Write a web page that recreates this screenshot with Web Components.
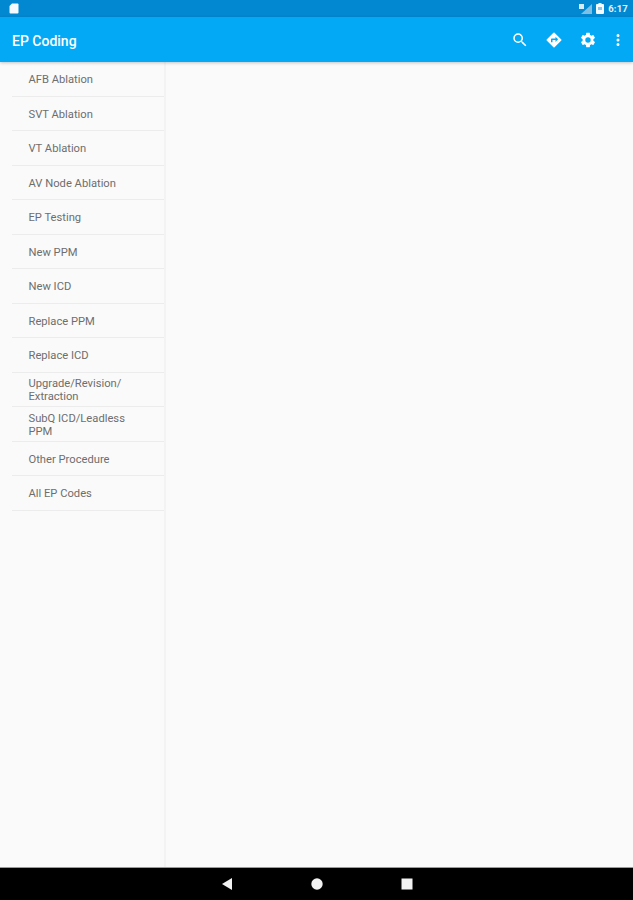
<!DOCTYPE html>
<html>
<head>
<meta charset="utf-8">
<title>EP Coding</title>
<style>
    html, body { margin: 0; height: 100%; background: #fafafa; }
    body { font-family: Roboto, "Liberation Sans", sans-serif; }
</style>
</head>
<body>
<ep-app>
    <status-bar slot="status"></status-bar>
    <app-bar slot="bar" title="EP Coding"></app-bar>
    <side-menu slot="menu">
        <menu-row>AFB Ablation</menu-row>
        <menu-row>SVT Ablation</menu-row>
        <menu-row>VT Ablation</menu-row>
        <menu-row>AV Node Ablation</menu-row>
        <menu-row>EP Testing</menu-row>
        <menu-row>New PPM</menu-row>
        <menu-row>New ICD</menu-row>
        <menu-row>Replace PPM</menu-row>
        <menu-row>Replace ICD</menu-row>
        <menu-row>Upgrade/Revision/ Extraction</menu-row>
        <menu-row>SubQ ICD/Leadless PPM</menu-row>
        <menu-row>Other Procedure</menu-row>
        <menu-row>All EP Codes</menu-row>
    </side-menu>
    <nav-bar slot="nav"></nav-bar>
</ep-app>

<script>
class EpApp extends HTMLElement {
    constructor() {
        super();
        this.attachShadow({ mode: 'open' });
        this.shadowRoot.innerHTML = /* html */ `
            <style>
                :host { display: flex; flex-direction: column; height: 900px; width: 633px; overflow: hidden; }
                .main { flex: 1; display: flex; min-height: 0; }
                .content { flex: 1; background: #fafafa; }
            </style>
            <slot name="status"></slot>
            <slot name="bar"></slot>
            <div class="main">
                <slot name="menu"></slot>
                <div class="content"></div>
            </div>
            <slot name="nav"></slot>
        `;
    }
}

class StatusBar extends HTMLElement {
    constructor() {
        super();
        this.attachShadow({ mode: 'open' });
        this.shadowRoot.innerHTML = /* html */ `
            <style>
                :host { display: flex; align-items: center; height: 17px; background: #0288d1; color: #e3f2fb; padding: 0 5px 0 9px; flex: none; }
                .right { margin-left: auto; display: flex; align-items: center; gap: 4px; }
                svg { display: block; }
                .time { font: 700 9.5px Roboto, sans-serif; letter-spacing: .2px; }
            </style>
            <svg width="10" height="11" viewBox="0 0 10 11"><path d="M3 .5h5.500a1 1 0 0 1 1 1v8a1 1 0 0 1-1 1h-7a1 1 0 0 1-1-1V3z" fill="#f4fafd"/></svg>
            <div class="right">
                <svg width="14" height="10" viewBox="0 0 14 10">
                    <path d="M14 0v10H3z" fill="#7fbfe3"/>
                    <path d="M1 0h5v5H1z" fill="#d5ebf7"/>
                </svg>
                <svg width="8" height="11" viewBox="0 0 8 11"><path d="M2.500 0h3v1H7a1 1 0 0 1 1 1v8a1 1 0 0 1-1 1H1a1 1 0 0 1-1-1V2a1 1 0 0 1 1-1h1.500z" fill="#f4fafd"/><path d="M2 4h4v3H2z" fill="#8cc7e8"/></svg>
                <span class="time">6:17</span>
            </div>
        `;
    }
}

class AppBar extends HTMLElement {
    constructor() {
        super();
        this.attachShadow({ mode: 'open' });
        this.shadowRoot.innerHTML = /* html */ `
            <style>
                :host { display: flex; align-items: center; height: 45px; background: #03a9f4; color: #fff; padding: 0 12px; flex: none;
                    position: relative; z-index: 1; box-shadow: 0 1px 3px rgba(0,0,0,.22); }
                .title { font: 500 14px Roboto, sans-serif; padding-top: 2px; }
                .actions { margin-left: auto; display: flex; align-items: center; gap: 16px; }
                .actions svg:last-child { margin-left: 2px; }
                svg { display: block; fill: #fff; }
            </style>
            <span class="title">${this.getAttribute('title')}</span>
            <div class="actions">
                <svg width="18" height="18" viewBox="0 0 24 24"><path d="M15.500 14h-.79l-.28-.27A6.470 6.470 0 0 0 16 9.500 6.500 6.500 0 1 0 9.500 16c1.610 0 3.090-.59 4.230-1.570l.27.28v.79l5 4.990L20.490 19zm-6 0C7.010 14 5 11.990 5 9.500S7.010 5 9.500 5 14 7.010 14 9.500 11.990 14 9.500 14z"/></svg>
                <svg width="18" height="18" viewBox="0 0 24 24"><path d="M21.710 11.290l-9-9a1 1 0 0 0-1.420 0l-9 9a1 1 0 0 0 0 1.420l9 9a1 1 0 0 0 1.420 0l9-9a1 1 0 0 0 0-1.420zM14 14.500V12h-4v3H8v-4a1 1 0 0 1 1-1h5V7.500l3.500 3.500z"/></svg>
                <svg width="18" height="18" viewBox="0 0 24 24"><path d="M19.140 12.940c.04-.3.060-.61.060-.94s-.02-.64-.07-.94l2.030-1.580a.49.49 0 0 0 .12-.61l-1.920-3.320a.49.49 0 0 0-.59-.22l-2.390.96a7.030 7.030 0 0 0-1.620-.94l-.36-2.540a.48.480 0 0 0-.48-.41h-3.840a.48.480 0 0 0-.47.41l-.36 2.540c-.59.240-1.130.57-1.620.94l-2.390-.96a.49.49 0 0 0-.59.22L2.740 8.870a.48.480 0 0 0 .12.61l2.030 1.580c-.05.3-.09.63-.09.94s.02.64.07.94l-2.030 1.580a.49.49 0 0 0-.12.61l1.920 3.320c.12.22.37.29.59.22l2.390-.96c.5.380 1.030.7 1.620.94l.36 2.540c.05.240.24.41.48.41h3.840c.24 0 .44-.17.47-.41l.36-2.540c.59-.24 1.130-.56 1.620-.94l2.390.96c.22.08.47 0 .59-.22l1.920-3.320a.48.480 0 0 0-.12-.61zM12 15.600a3.600 3.600 0 1 1 0-7.200 3.600 3.600 0 0 1 0 7.200z"/></svg>
                <svg width="6" height="18" viewBox="9 0 6 24"><path d="M12 8a2 2 0 1 0 0-4 2 2 0 0 0 0 4zm0 2a2 2 0 1 0 0 4 2 2 0 0 0 0-4zm0 6a2 2 0 1 0 0 4 2 2 0 0 0 0-4z"/></svg>
            </div>
        `;
    }
}

class SideMenu extends HTMLElement {
    constructor() {
        super();
        this.attachShadow({ mode: 'open' });
        this.shadowRoot.innerHTML = /* html */ `
            <style>
                :host { display: block; width: 164px; height: 100%; border-right: 2px solid #f3f3f3; background: #fafafa; flex: none; }
                .list { display: grid; grid-auto-rows: 34.5px; margin: .4px 0 0 12px; }
            </style>
            <div class="list"><slot></slot></div>
        `;
    }
}

class MenuRow extends HTMLElement {
    constructor() {
        super();
        this.attachShadow({ mode: 'open' });
        this.shadowRoot.innerHTML = /* html */ `
            <style>
                :host { display: flex; align-items: center; box-sizing: border-box; padding: 1px 30px 0 16.500px; border-bottom: 1px solid #ececec;
                    font: 400 11.2px/13px Roboto, sans-serif; color: #6e6e6e; }
            </style>
            <slot></slot>
        `;
    }
}

class NavBar extends HTMLElement {
    constructor() {
        super();
        this.attachShadow({ mode: 'open' });
        this.shadowRoot.innerHTML = /* html */ `
            <style>
                :host { display: flex; align-items: center; justify-content: center; gap: 78px; height: 33px; background: #000; flex: none; border-top: 1px solid #9a9a9a; box-sizing: border-box; }
                svg { display: block; fill: #f2f2f2; }
            </style>
            <svg width="12" height="12" viewBox="0 0 12 12"><path d="M11 0v12L1 6z"/></svg>
            <svg width="12" height="12" viewBox="0 0 12 12"><circle cx="6" cy="6" r="5.700"/></svg>
            <svg width="12" height="12" viewBox="0 0 12 12"><path d="M.5.500h11v11H.5z"/></svg>
        `;
    }
}

customElements.define('ep-app', EpApp);
customElements.define('status-bar', StatusBar);
customElements.define('app-bar', AppBar);
customElements.define('side-menu', SideMenu);
customElements.define('menu-row', MenuRow);
customElements.define('nav-bar', NavBar);
</script>
</body>
</html>
